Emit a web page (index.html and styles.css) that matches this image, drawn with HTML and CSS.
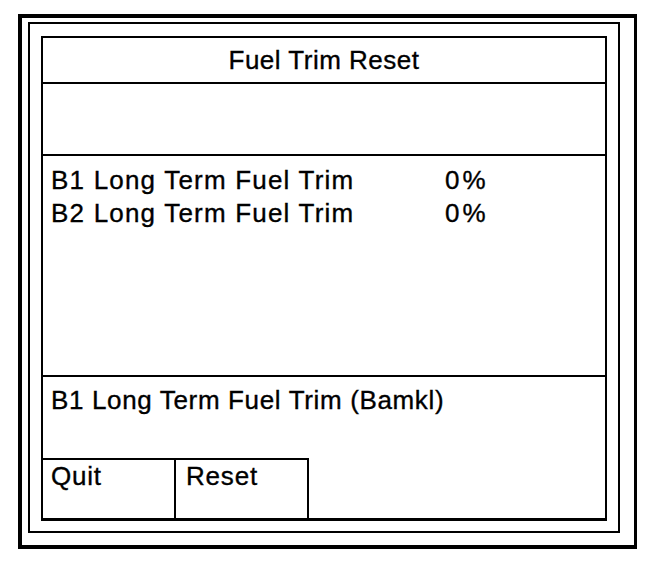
FILE: index.html
```html
<!DOCTYPE html>
<html>
<head>
<meta charset="utf-8">
<link rel="stylesheet" href="styles.css">
</head>
<body>
<div class="outer">
  <div class="middle">
    <div class="screen">
      <div class="title">Fuel Trim Reset</div>
      <div class="blank"></div>
      <div class="data">
        <div class="row"><span class="label">B1 Long Term Fuel Trim</span><span class="value">0%</span></div>
        <div class="row"><span class="label">B2 Long Term Fuel Trim</span><span class="value">0%</span></div>
      </div>
      <div class="message">B1 Long Term Fuel Trim (Bamkl)</div>
      <div class="buttons">
        <div class="btn">Quit</div>
        <div class="btn">Reset</div>
      </div>
    </div>
  </div>
</div>
</body>
</html>
```

FILE: styles.css
```css
html, body {
  margin: 0;
  padding: 0;
  background: #fff;
}
body {
  font-family: "Liberation Sans", Arial, sans-serif;
  font-size: 26px;
  color: #000;
  -webkit-text-stroke: 0.35px #000;
}
.outer {
  box-sizing: border-box;
  margin: 14px 0 0 18px;
  width: 619px;
  height: 535px;
  border: 4px solid #000;
  border-right-width: 3px;
  padding: 4px 14px 12px 6px;
  display: flex;
}
.middle {
  flex: 1;
  border: 2px solid #000;
  padding: 12px 11px 10px 11px;
  display: flex;
}
.screen {
  flex: 1;
  border: 2px solid #000;
  border-bottom-width: 3px;
  display: flex;
  flex-direction: column;
}
.title {
  height: 43px;
  border-bottom: 2px solid #000;
  display: flex;
  align-items: center;
  justify-content: center;
  letter-spacing: 0.5px;
  padding-top: 1px;
  box-sizing: content-box;
}
.blank {
  height: 70px;
  border-bottom: 2px solid #000;
}
.data {
  box-sizing: border-box;
  height: 221px;
  border-bottom: 2px solid #000;
  padding: 8px 0 0 8px;
}
.row {
  display: grid;
  grid-template-columns: 394px auto;
  line-height: 33px;
  letter-spacing: 1.2px;
}
.value {
  letter-spacing: 3px;
}
.message {
  box-sizing: border-box;
  height: 81px;
  padding: 8px 0 0 8px;
  line-height: 30px;
  letter-spacing: 0.65px;
}
.buttons {
  display: flex;
  flex: 1;
}
.btn {
  box-sizing: border-box;
  width: 133px;
  border-top: 2px solid #000;
  border-right: 2px solid #000;
  padding: 1px 0 0 8px;
  line-height: 30px;
  letter-spacing: 0.8px;
}
.btn + .btn {
  padding-left: 10px;
}
```
